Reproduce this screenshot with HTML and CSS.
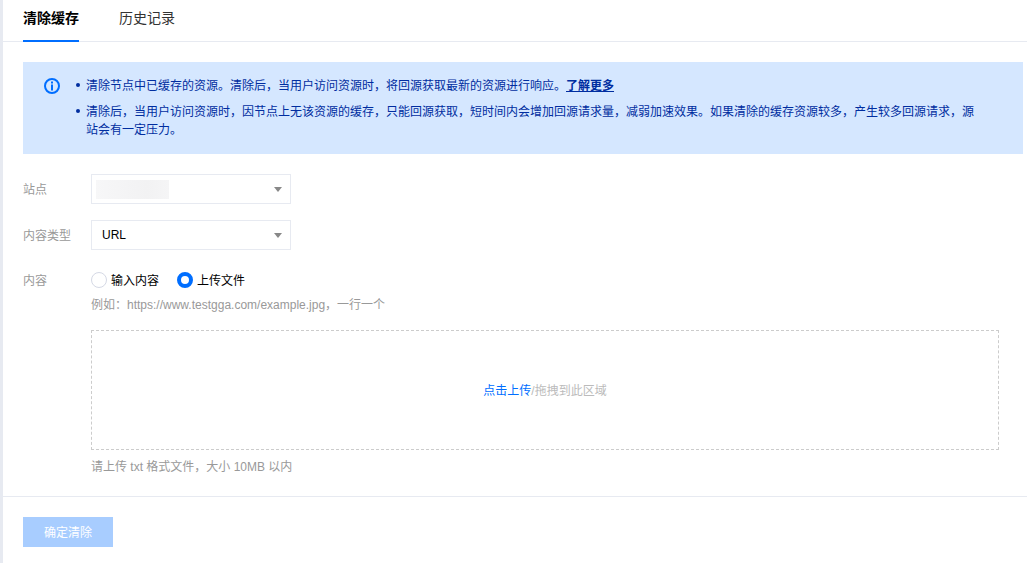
FILE: index.html
```html
<!DOCTYPE html>
<html lang="zh-CN">
<head>
<meta charset="utf-8">
<title>清除缓存</title>
<link rel="stylesheet" href="styles.css">
</head>
<body>
<main class="page">
  <nav class="tabs">
    <span class="tab tab-active">清除缓存</span>
    <span class="tab">历史记录</span>
  </nav>
  <section class="content">
    <div class="notice">
      <svg class="notice-icon" viewBox="0 0 16 16" width="16" height="16" aria-hidden="true">
        <circle cx="8" cy="8" r="7" fill="none" stroke="#006eff" stroke-width="2"/>
        <rect x="7" y="3.5" width="2" height="2" fill="#006eff"/>
        <rect x="7" y="6.5" width="2" height="6" fill="#006eff"/>
      </svg>
      <ul class="notice-list">
        <li>清除节点中已缓存的资源。清除后，当用户访问资源时，将回源获取最新的资源进行响应。<a class="notice-link" href="#">了解更多</a></li>
        <li>清除后，当用户访问资源时，因节点上无该资源的缓存，只能回源获取，短时间内会增加回源请求量，减弱加速效果。如果清除的缓存资源较多，产生较多回源请求，源站会有一定压力。</li>
      </ul>
    </div>
    <form class="form">
      <div class="row">
        <span class="label">站点</span>
        <div class="select"><span class="blur-value"></span><span class="caret"></span></div>
      </div>
      <div class="row row-type">
        <span class="label">内容类型</span>
        <div class="select"><span class="select-value">URL</span><span class="caret"></span></div>
      </div>
      <div class="row row-content">
        <span class="label label-radio">内容</span>
        <div class="field">
          <div class="radios">
            <span class="radio"><span class="dot"></span>输入内容</span>
            <span class="radio"><span class="dot dot-on"></span>上传文件</span>
          </div>
          <p class="hint hint-top">例如：https://www.testgga.com/example.jpg，一行一个</p>
          <div class="drop"><span class="drop-link">点击上传</span><span class="drop-text">/拖拽到此区域</span></div>
          <p class="hint hint-bottom">请上传 txt 格式文件，大小 10MB 以内</p>
        </div>
      </div>
    </form>
  </section>
  <footer class="footer">
    <button class="submit" type="button" disabled>确定清除</button>
  </footer>
</main>
</body>
</html>
```
FILE: styles.css
```css
* { box-sizing: border-box; }
html, body { margin: 0; height: 100%; background: #fff; overflow: hidden; }
body {
  font-family: "Liberation Sans", Arial, "Noto Sans CJK SC", sans-serif;
  font-size: 12px;
  color: #000;
}
.page {
  height: 563px;
  border-left: 3px solid #e7eaf1;
  display: flex;
  flex-direction: column;
}
.tabs {
  display: flex;
  gap: 40px;
  height: 42px;
  padding-left: 20px;
  border-bottom: 1px solid #e7eaf1;
}
.tab {
  height: 42px;
  font-size: 14px;
  line-height: 36px;
  color: #333;
}
.tab-active {
  font-weight: 700;
  color: #000;
  border-bottom: 2px solid #006eff;
}
.content { padding: 20px 0 0 20px; }
.notice {
  display: flex;
  height: 92px;
  width: 1000px;
  padding: 15px 40px 0 21px;
  background: #d5e7ff;
  color: #002da0;
}
.notice-icon { flex: none; margin-top: 1px; }
.notice-list {
  margin: 0 0 0 15px;
  padding: 0;
  list-style: none;
  line-height: 18px;
}
.notice-list li { position: relative; padding-left: 11px; margin-bottom: 8px; }
.notice-list li::before {
  content: "";
  position: absolute;
  left: 1px;
  top: 6px;
  width: 4px;
  height: 4px;
  border-radius: 50%;
  background: #002da0;
}
.notice-link { color: #002da0; font-weight: 700; text-decoration: underline; }
.form { padding-top: 20px; }
.row { display: flex; align-items: center; margin-bottom: 16px; }
.row-type { margin-bottom: 20px; }
.row-content { align-items: flex-start; margin-bottom: 0; }
.label { width: 68px; padding-bottom: 2px; color: #999; }
.label-radio { padding-bottom: 0; line-height: 22px; }
.select {
  position: relative;
  display: flex;
  align-items: center;
  width: 200px;
  height: 30px;
  padding-left: 10px;
  border: 1px solid #e7eaf1;
}
.select-value { color: #000; }
.blur-value {
  width: 73px;
  height: 19px;
  margin-left: -6px;
  background: linear-gradient(90deg, #f7f7f8, #f2f2f3 70%, #f5f5f6);
}
.caret {
  position: absolute;
  right: 8px;
  top: 12px;
  border-left: 4px solid transparent;
  border-right: 4px solid transparent;
  border-top: 5px solid #888;
}
.field { flex: none; width: 908px; }
.radios { display: flex; gap: 18px; height: 20px; }
.radio { display: flex; align-items: center; gap: 4px; padding-bottom: 2px; color: #000; }
.dot {
  width: 16px;
  height: 16px;
  margin-bottom: -2px;
  border: 1px solid #d5d9e5;
  border-radius: 50%;
  background: #fff;
}
.dot-on { border: 4px solid #006eff; }
.hint { margin: 0; color: #999; line-height: 18px; }
.hint-top { margin-top: 6px; }
.drop {
  display: flex;
  align-items: center;
  justify-content: center;
  height: 120px;
  margin-top: 16px;
  padding-bottom: 2px;
  border: 1px dashed #ccc;
}
.drop-link { color: #006eff; }
.drop-text { color: #bbb; }
.hint-bottom { margin-top: 8px; }
.footer {
  margin-top: 20px;
  padding: 20px 0 0 20px;
  border-top: 1px solid #e7eaf1;
}
.submit {
  display: block;
  width: 90px;
  height: 30px;
  padding: 0 0 2px;
  border: 0;
  background: #a8cdff;
  color: #fff;
  font: inherit;
}
```
